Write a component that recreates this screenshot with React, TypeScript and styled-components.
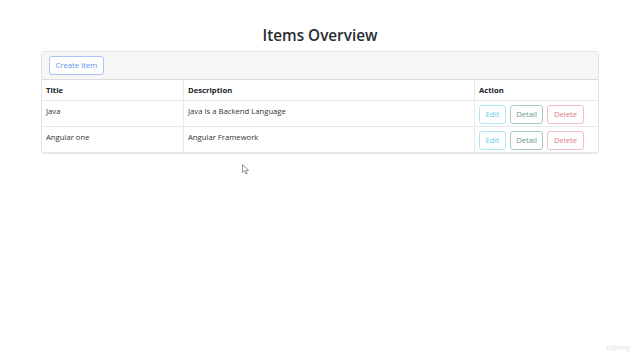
import React from "react";
import styled, { createGlobalStyle } from "styled-components";

const Global = createGlobalStyle`
  html, body { margin: 0; padding: 0; background: #fff; }
  body { font-family: "Open Sans", "Noto Sans", Arial, sans-serif; color: #212529; width: 640px; height: 360px; overflow: hidden; position: relative; }
`;

const Page = styled.div`
  padding: 23px 41px 0 41px;
`;

const Heading = styled.h1`
  margin: 0 0 4px 0;
  text-align: center;
  font-size: 15.3px;
  font-weight: 600;
  line-height: 24px;
  color: #2a2d30;
`;

const Card = styled.div`
  border: 1px solid #e3e3e3;
  border-radius: 3px;
  overflow: hidden;
`;

const CardHeader = styled.div`
  background: #f7f7f7;
  padding: 4px 7px;
  border-bottom: 1px solid #dcdcdc;
  display: flex;
  height: 19px;
`;

const Table = styled.table`
  width: 100%;
  border-collapse: collapse;
  font-size: 7.7px;
`;

const Th = styled.th<{ $w?: number }>`
  text-align: left;
  font-weight: 700;
  padding: 0 4px;
  height: 20px;
  border-bottom: 1px solid #e9e9e9;
  border-left: 1px solid #e9e9e9;
  width: ${(p) => (p.$w ? `${p.$w}px` : "auto")};
  &:first-child { border-left: none; }
`;

const Td = styled.td`
  padding: 5px 4px 0 4px;
  height: 20px;
  vertical-align: top;
  border-bottom: 1px solid #e9e9e9;
  border-left: 1px solid #e9e9e9;
  color: #333;
  &:first-child { border-left: none; }
`;

const Actions = styled.div`
  display: flex;
  gap: 4px;
  margin-top: -1px;
`;

const tones = {
  primary: { c: "#5b8ff0", b: "#a9c4f5" },
  info: { c: "#62cbe2", b: "#b0e9f4" },
  success: { c: "#679a7d", b: "#a8cab6" },
  danger: { c: "#e27a87", b: "#f2bcc3" },
};

const Btn = styled.button<{ $tone: keyof typeof tones }>`
  font-family: inherit;
  font-size: 7.7px;
  background: #fff;
  color: ${(p) => tones[p.$tone].c};
  border: 1px solid ${(p) => tones[p.$tone].b};
  border-radius: 3px;
  height: 19px;
  padding: 0 5.5px;
  line-height: 17px;
  cursor: pointer;
`;

const Cursor = styled.svg`
  position: absolute;
  left: 242px;
  top: 164px;
`;

const Watermark = styled.div`
  position: absolute;
  right: 10px;
  bottom: 8px;
  font-size: 7px;
  color: #e6e6e6;
  font-weight: 600;
`;

const rows = [
  { t: "Java", d: "Java Is a Backend Language" },
  { t: "Angular one", d: "Angular Framework" },
];

export default function App() {
  return (
    <>
      <Global />
      <Page>
        <Heading>Items Overview</Heading>
        <Card>
          <CardHeader>
            <Btn $tone="primary">Create Item</Btn>
          </CardHeader>
          <Table>
            <thead>
              <tr>
                <Th $w={133}>Title</Th>
                <Th $w={282}>Description</Th>
                <Th>Action</Th>
              </tr>
            </thead>
            <tbody>
              {rows.map((r) => (
                <tr key={r.t}>
                  <Td>{r.t}</Td>
                  <Td>{r.d}</Td>
                  <Td>
                    <Actions>
                      <Btn $tone="info">Edit</Btn>
                      <Btn $tone="success">Detail</Btn>
                      <Btn $tone="danger">Delete</Btn>
                    </Actions>
                  </Td>
                </tr>
              ))}
            </tbody>
          </Table>
        </Card>
      </Page>
      <Cursor width="8" height="11" viewBox="0 0 8 11">
        <path d="M0.5 0.5 L0.5 8.5 L2.5 6.8 L4 10 L5.2 9.4 L3.8 6.4 L6.5 6.4 Z" fill="#fff" stroke="#777" strokeWidth="0.8" />
      </Cursor>
      <Watermark>Udemy</Watermark>
    </>
  );
}
